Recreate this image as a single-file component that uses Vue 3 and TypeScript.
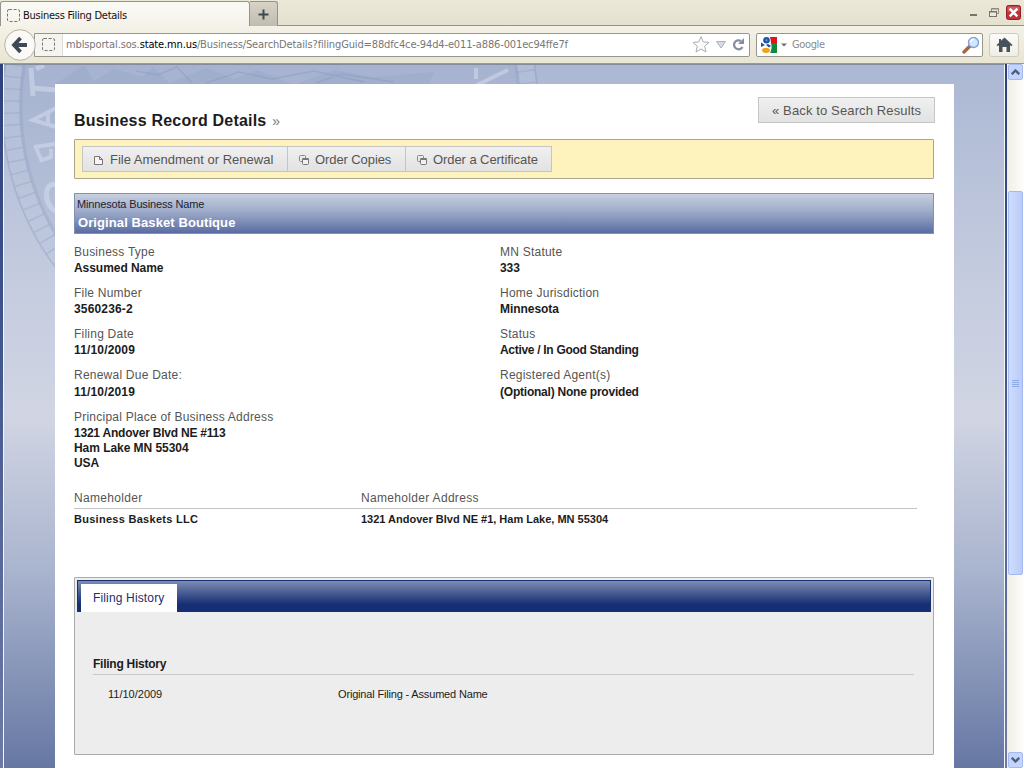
<script setup lang="ts">
interface Line { text: string; fit?: string }
interface Field { label: string; lines: Line[]; cls?: string }

const left: Field[] = [
  { label: 'Business Type', lines: [{ text: 'Assumed Name' }] },
  { label: 'File Number', lines: [{ text: '3560236-2', fit: 'wide' }] },
  { label: 'Filing Date', lines: [{ text: '11/10/2009', fit: 'wide' }] },
  { label: 'Renewal Due Date:', lines: [{ text: '11/10/2019', fit: 'wide' }], cls: 'loose' },
  {
    label: 'Principal Place of Business Address',
    lines: [{ text: '1321 Andover Blvd NE #113', fit: 'snug' }, { text: 'Ham Lake MN 55304' }, { text: 'USA' }],
  },
]
const right: Field[] = [
  { label: 'MN Statute', lines: [{ text: '333' }] },
  { label: 'Home Jurisdiction', lines: [{ text: 'Minnesota' }] },
  { label: 'Status', lines: [{ text: 'Active / In Good Standing', fit: 'tight' }] },
  { label: 'Registered Agent(s)', lines: [{ text: '(Optional) None provided', fit: 'snug' }], cls: 'loose' },
]
const columns: Field[][] = [left, right]

const ticks: number[] = Array.from({ length: 135 }, (_, i) => (i * 8) / 3)
</script>

<template>
  <div class="window">
    <header class="tabs">
      <div class="tab">
        <svg class="tab-icon" width="15" height="15" viewBox="0 0 15 15"><rect x="1.500" y="1.500" width="12" height="12" rx="1.500" fill="none" stroke="#777" stroke-dasharray="3 1.6" /></svg>
        <span class="tab-title">Business Filing Details</span>
      </div>
      <div class="new-tab">
        <svg width="11" height="11" viewBox="0 0 11 11"><path d="M5.5 0.5V10.5M0.5 5.5H10.5" stroke="#3c4852" stroke-width="2" /></svg>
      </div>
      <div class="controls">
        <svg width="54" height="18" viewBox="0 0 54 18">
          <path d="M5 12H12" stroke="#777669" stroke-width="2" />
          <path d="M26.500 8V5.500H33.500V10.500H31M26 6H34" fill="none" stroke="#8d8b7e" />
          <rect x="24.500" y="8.500" width="7" height="5" fill="#eeeadb" stroke="#77766b" />
          <path d="M24 9H32" stroke="#77766b" />
          <rect x="41.500" y="2.500" width="14" height="14" rx="2" fill="#c4313b" stroke="#8f2029" />
          <path d="M42.500 9V4.500Q42.500 3.500 44 3.500H53Q54.500 3.500 54.500 5V8Z" fill="#dc6a6a" opacity=".7" />
          <path d="M44.700 5.700L52.300 13.300M52.300 5.700L44.700 13.300" stroke="#fff" stroke-width="2.400" />
        </svg>
      </div>
    </header>

    <nav class="toolbar">
      <div class="back">
        <svg width="34" height="34" viewBox="0 0 34 34">
          <circle cx="17" cy="17" r="15.300" fill="#faf9f5" stroke="#b5b2a5" />
          <path d="M17.500 10L11 17L17.500 24M12 17H24" fill="none" stroke="#3d4a55" stroke-width="3.800" />
        </svg>
      </div>
      <div class="address">
        <div class="identity">
          <svg width="15" height="15" viewBox="0 0 15 15"><rect x="1.500" y="1.500" width="12" height="12" rx="1.500" fill="none" stroke="#777" stroke-dasharray="3 1.6" /></svg>
        </div>
        <span class="url">mblsportal.sos.<b>state.mn.us</b>/Business/SearchDetails?filingGuid=88dfc4ce-94d4-e011-a886-001ec94ffe7f</span>
        <svg class="url-icons" width="56" height="20" viewBox="0 0 56 20">
          <path d="M10 1.700L12.300 6.900L18 7.400L13.700 11.200L15 17L10 14L5 17L6.300 11.200L2 7.400L7.700 6.900Z" fill="#fbfbfb" stroke="#a9acb2" />
          <path d="M25.500 6.500H34.500L30 13Z" fill="#d7dae6" stroke="#aeb3bb" />
          <path d="M50 6A4.500 4.500 0 1 0 51.500 12" fill="none" stroke="#858ea0" stroke-width="2.200" />
          <path d="M53 3V9H47Z" fill="#858ea0" />
        </svg>
      </div>
      <div class="search">
        <svg width="32" height="18" viewBox="0 0 32 18">
          <path d="M9 1H17V7.500H10Z" fill="#e0161b" />
          <path d="M11 7H17V17H10Q12.500 12 11 7Z" fill="#128a3c" />
          <path d="M8 1H10Q12 8 10 17H8Z" fill="#fff" />
          <circle cx="6.500" cy="4.300" r="3.300" fill="#1b55a8" /><circle cx="6.500" cy="4.300" r="1" fill="#7c9fd0" />
          <path d="M1 6.500L5 9L1 11Z" fill="#1b4d9d" /><path d="M8 8L11 10L9 11.500L6 9Z" fill="#1b4d9d" />
          <ellipse cx="6" cy="14.300" rx="4" ry="2.600" fill="#f0a21c" />
          <path d="M21 7.500H27L24 10.500Z" fill="#6d6d6d" />
        </svg>
        <span class="engine">Google</span>
        <svg class="lens" width="18" height="18" viewBox="0 0 18 18">
          <path d="M2 16L8 10" stroke="#a8673e" stroke-width="3.400" stroke-linecap="round" />
          <circle cx="11.500" cy="6.500" r="5" fill="#cfe6fb" stroke="#7da3d6" stroke-width="1.400" />
          <path d="M8.500 6A3.200 3.200 0 0 1 12 3.300" fill="none" stroke="#fff" stroke-width="1.500" />
        </svg>
      </div>
      <div class="home">
        <svg width="17" height="16" viewBox="0 0 17 16"><path d="M8.500 0.500L16.500 8L15.200 9.300L14 8.200V15H10.500V10H6.500V15H3V8.200L1.800 9.300L0.500 8L3 5.700V2H5V3.800Z" fill="#47525c" /></svg>
      </div>
    </nav>

    <div class="viewport">
      <div class="frame"></div>
      <div class="page">
        <svg class="seal" width="600" height="330" viewBox="0 0 600 330">
          <circle cx="266" cy="42" r="268" fill="#8797bd" opacity=".12" />
          <g fill="none" stroke="#8090b8">
            <circle cx="266" cy="42" r="259" stroke="#ced7e9" stroke-width="16" opacity=".28" />
            <circle cx="266" cy="42" r="268" opacity=".28" stroke-width="1.500" />
            <circle cx="266" cy="42" r="249" opacity=".22" stroke-width="3" />
            <path v-for="t in ticks" :key="t" d="M516 42H533" :transform="`rotate(${t} 266 42)`" opacity=".26" stroke-width="1.500" />
          </g>
          <g fill="none" stroke="#d8dff0" stroke-width="5" opacity=".5">
            <path d="M27 3L29 31M28 23L51 25M32 4L40 0" />
            <path d="M52 43L29 55L52 62M44 47V60" stroke-width="4" />
            <path d="M31 80L38 97M30 82L51 79M38 95L47 92V84" stroke-width="4" />
            <ellipse cx="52" cy="133" rx="9" ry="14" transform="rotate(-18 52 133)" />
            <path d="M472 3V14M473 20L504 5" stroke-width="4" />
          </g>
          <path d="M80 0L90 16L110 4L138 12L149 2L166 18L202 3L230 14L254 5L291 20H50ZM290 20L330 5L370 12L430 7L425 20Z" fill="#7f91ba" opacity=".16" />
          <path d="M132 6L154 10L173 2L188 18M202 18L235 7L268 14L310 6L360 17M312 18L337 9L390 17" fill="none" stroke="#7486b1" stroke-width="1.500" opacity=".25" />
        </svg>
        <main class="sheet">
          <div class="heading">
            <h1>Business Record Details <i>»</i></h1>
            <button class="back-link">« Back to Search Results</button>
          </div>

          <div class="actions">
            <button class="a1">
              <svg width="9" height="10" viewBox="0 0 9 10"><path d="M0.500 1.500H5.500L8.500 4.500V9.500H0.500ZM5.500 1.500V4.500H8.500" fill="#f5f5f5" stroke="#777" /></svg>
              <span>File Amendment or Renewal</span>
            </button>
            <button class="a2">
              <svg width="10" height="10" viewBox="0 0 10 10"><rect x=".5" y=".5" width="6" height="6" rx="1" fill="none" stroke="#888" /><rect x="3.500" y="3.500" width="6" height="6" rx="1" fill="#f2f2f2" stroke="#777" /><path d="M3.500 4H9.500" stroke="#777" stroke-width="2" /></svg>
              <span>Order Copies</span>
            </button>
            <button class="a3">
              <svg width="10" height="10" viewBox="0 0 10 10"><rect x=".5" y=".5" width="6" height="6" rx="1" fill="none" stroke="#888" /><rect x="3.500" y="3.500" width="6" height="6" rx="1" fill="#f2f2f2" stroke="#777" /><path d="M3.500 4H9.500" stroke="#777" stroke-width="2" /></svg>
              <span>Order a Certificate</span>
            </button>
          </div>

          <section class="banner">
            <div class="banner-label">Minnesota Business Name</div>
            <div class="banner-name">Original Basket Boutique</div>
          </section>

          <section class="details">
            <dl v-for="(col, c) in columns" :key="c">
              <div v-for="f in col" :key="f.label" class="field" :class="f.cls">
                <dt>{{ f.label }}</dt>
                <dd v-for="l in f.lines" :key="l.text" :class="l.fit">{{ l.text }}</dd>
              </div>
            </dl>
          </section>

          <section class="holders">
            <div class="row head"><span>Nameholder</span><span>Nameholder Address</span></div>
            <div class="row body"><span class="holder-name">Business Baskets LLC</span><span>1321 Andover Blvd NE #1, Ham Lake, MN 55304</span></div>
          </section>

          <section class="history">
            <div class="history-tabs"><div class="history-tab">Filing History</div></div>
            <div class="history-title">Filing History</div>
            <div class="history-row"><span class="date">11/10/2009</span><span class="what">Original Filing - Assumed Name</span></div>
          </section>
        </main>
      </div>
      <div class="frame-right"></div>
      <div class="scrollbar">
        <div class="arrow"><svg width="9" height="6" viewBox="0 0 9 6"><path d="M0.800 5.200L4.500 1.500L8.200 5.200" fill="none" stroke="#4a6089" stroke-width="2.400" /></svg></div>
        <div class="thumb"><i></i><i></i><i></i><i></i></div>
        <div class="arrow down"><svg width="9" height="6" viewBox="0 0 9 6"><path d="M0.800 0.800L4.500 4.500L8.200 0.800" fill="none" stroke="#4a6089" stroke-width="2.400" /></svg></div>
      </div>
    </div>
  </div>
</template>

<style>
body { overflow: hidden; }
</style>

<style scoped>
* { box-sizing: border-box; }
.window { width: 1024px; height: 768px; overflow: hidden; display: flex; flex-direction: column; font-family: "Liberation Sans", Arial, sans-serif; background: #ece9d8; white-space: nowrap; }
.tabs { height: 26px; display: flex; align-items: flex-start; background: linear-gradient(#ebe8d8, #e5e1cf); border-bottom: 1px solid #96948a; flex: none; }
.tab { width: 250px; height: 26px; margin-top: 1px; border: 1px solid #96948a; border-bottom: 0; border-radius: 3px 3px 0 0; background: linear-gradient(#fafaf6, #f4f2e9); display: flex; align-items: center; padding: 1px 0 0 5px; gap: 2px; }
.tab-title { font: 11px "DejaVu Sans Condensed", "DejaVu Sans", sans-serif; letter-spacing: -0.260px; color: #111; }
.new-tab { width: 28px; height: 25px; margin-top: 1px; border: 1px solid #96948a; border-left: 0; border-bottom: 0; border-radius: 0 3px 0 0; background: linear-gradient(#d7d3c6, #bfbbae); display: flex; align-items: center; justify-content: center; }
.controls { margin: 3px 5px 0 auto; display: flex; }
.controls svg { overflow: visible; }
.toolbar { height: 37px; flex: none; background: linear-gradient(#f4f2e8, #e9e5d3); display: flex; align-items: center; }
.back { width: 34px; height: 34px; margin-left: 3px; display: flex; z-index: 1; }
.address { width: 716px; height: 24px; margin-left: -3px; background: #fff; border: 1px solid #98968c; border-radius: 0 2px 2px 0; display: flex; align-items: center; }
.identity { width: 28px; height: 22px; padding-left: 6px; background: #f5f4ef; border-right: 1px solid #ddd; display: flex; align-items: center; }
.url { margin-left: 3px; font: 11px "DejaVu Sans Condensed", "DejaVu Sans", sans-serif; letter-spacing: -0.130px; color: #777; }
.url b { font-weight: normal; color: #000; }
.url-icons { margin: 0 2px 0 auto; }
.search { width: 227px; height: 24px; margin-left: 6px; background: #fff; border: 1px solid #98968c; border-radius: 2px; display: flex; align-items: center; padding: 0 2px 0 3px; }
.engine { font: 11px "DejaVu Sans Condensed", "DejaVu Sans", sans-serif; letter-spacing: -0.360px; color: #8a8a8a; }
.lens { margin-left: auto; }
.home { width: 30px; height: 24px; margin-left: 6px; border: 1px solid #cfccbd; border-radius: 3px; background: linear-gradient(#fcfbf8, #f0eee4); display: flex; align-items: center; justify-content: center; }
.viewport { flex: 1; display: flex; min-height: 0; border-top: 1px solid #9a9a91; }
.frame { width: 4px; background: linear-gradient(#2c427b, #42568d 40%, #6e7aa5); border-right: 1px solid #f5f6fa; }
.page { width: 1001px; position: relative; border-top: 1px solid #848c9e; border-right: 1px solid #f5f6fa; background: linear-gradient(#abb8d3, #c6cde0 33%, #d1d5e3 50%, #a9b4ce 72%, #6677a3); }
.seal { position: absolute; left: 0; top: 0; }
.sheet { position: relative; margin: 19px 0 0 51px; width: 899px; height: 684px; background: #fff; padding: 13px 20px 0 19px; }
.heading { display: flex; justify-content: space-between; height: 42px; margin-right: -1px; }
h1 { margin: 14px 0 0; font-size: 16px; line-height: 20px; letter-spacing: 0.210px; color: #1c1c1c; }
h1 i { font: 14px "Liberation Sans", sans-serif; color: #777; margin-left: 1px; }
button { font: 13px/20px "Liberation Sans", Arial, sans-serif; color: #555; background: linear-gradient(#f0f0f0, #e2e2e2); border: 1px solid #c5c5c5; padding: 0; display: flex; align-items: center; }
.back-link { width: 177px; height: 26px; padding: 2px 0 0 13px; letter-spacing: 0.130px; }
.actions { height: 40px; border: 1px solid #a9a590; background: #fff3bd; padding: 6px 7px; display: flex; border-radius: 1px; }
.actions button { height: 26px; padding: 2px 0 0 11px; border-right-width: 0; }
.actions .a1 { width: 205px; }
.a1 span { margin-left: 7px; }
.actions .a2 { width: 118px; letter-spacing: -0.090px; }
.a2 span { margin-left: 6px; }
.actions .a3 { width: 147px; letter-spacing: -0.070px; border-right-width: 1px; }
.a3 span { margin-left: 6px; }
.banner { margin-top: 14px; height: 41px; border: 1px solid #8291b1; background: linear-gradient(#c7cfe0, #9dabc9 45%, #5a6da3); padding: 3px 0 0 2px; }
.banner-label { font-size: 11px; line-height: 14px; letter-spacing: -0.160px; color: #1c2233; }
.banner-name { margin: 3px 0 0 1px; font-size: 13px; line-height: 17px; font-weight: bold; letter-spacing: 0.090px; color: #fff; }
.details { display: flex; padding-top: 10px; height: 256px; }
dl { margin: 0; width: 426px; }
.field { height: 41px; }
.field.loose { height: 42px; }
.field.loose dt { height: 17px; }
dt { height: 16px; font-size: 12px; line-height: 16px; letter-spacing: 0.230px; color: #555; }
dd { margin: 0; height: 15px; font-size: 12px; line-height: 16px; font-weight: bold; color: #1c1c1c; letter-spacing: -0.050px; }
dd.wide { letter-spacing: 0.160px; }
dd.snug { letter-spacing: -0.220px; }
dd.tight { letter-spacing: -0.300px; }
.holders { width: 843px; }
.row { display: flex; }
.row span:first-child { width: 287px; }
.head { height: 19px; border-bottom: 1px solid #c4c4c4; font-size: 12px; line-height: 16px; letter-spacing: 0.320px; color: #555; }
.body { padding-top: 3px; font-size: 11px; line-height: 15px; font-weight: bold; color: #1c1c1c; }
.holder-name { letter-spacing: 0.280px; }
.history { margin-top: 50px; height: 178px; border: 1px solid #aaa; background: #ededed; padding: 0 2px; border-radius: 1px; }
.history-tabs { margin-top: 2px; height: 32px; border: 1px solid #17306f; border-bottom: 0; background: linear-gradient(#7d8cb3, #162f74 75%); padding: 3px 0 0 3px; }
.history-tab { width: 96px; height: 28px; padding-left: 12px; background: #fff; font-size: 12px; line-height: 28px; letter-spacing: 0.150px; color: #17306f; }
.history-title { margin: 43px 17px 0 16px; height: 20px; border-bottom: 1px solid #c9c9c9; font-size: 12px; line-height: 18px; font-weight: bold; color: #1c1c1c; letter-spacing: -0.250px; }
.history-row { margin: 12px 0 0 31px; display: flex; font-size: 11px; line-height: 15px; color: #1c1c1c; }
.date { width: 230px; }
.what { letter-spacing: -0.170px; }
.frame-right { width: 2px; background: linear-gradient(#2c427b, #42568d 40%, #6e7aa5); }
.scrollbar { width: 17px; background: linear-gradient(90deg, #f0efe6, #fdfdfb); display: flex; flex-direction: column; align-items: center; }
.arrow { width: 15px; height: 16px; border: 1px solid #a5b9ee; border-radius: 2px; background: #c5d4fb; display: flex; align-items: center; justify-content: center; }
.thumb { width: 15px; height: 384px; margin-top: 111px; border: 1px solid #a5b9ee; border-radius: 2px; background: linear-gradient(90deg, #cfdcfd, #b9cbf8); display: flex; flex-direction: column; align-items: center; justify-content: center; gap: 1px; }
.thumb i { width: 7px; height: 1px; background: #8fa8e6; }
.down { margin-top: auto; }
</style>
